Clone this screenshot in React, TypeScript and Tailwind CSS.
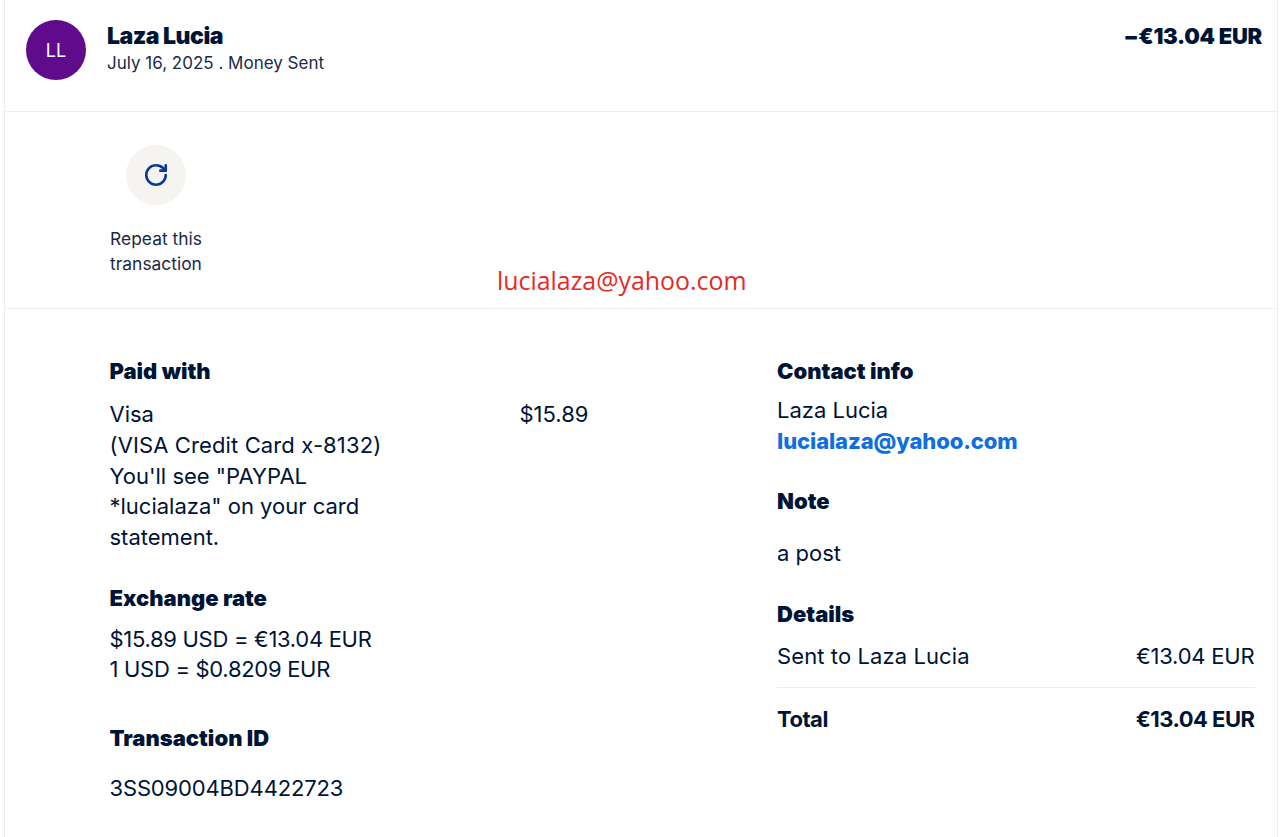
import { RotateCw } from "lucide-react";

const H = "font-black text-[22px] leading-[28px] tracking-[0px] text-[#001435]";
const B = "text-[22px] leading-[30.5px] text-[#001435]";

export default function App() {
  return (
    <div className="h-[837px] w-[1280px] overflow-hidden bg-white font-['Inter',sans-serif]">
      <div className="ml-[4px] mr-[2px] h-full border-x border-[#ededed]">
        <header className="flex h-[112px] items-start border-b border-[#ededed] pl-[21px] pr-[15px] pt-[20px]">
          <div className="flex h-[60px] w-[60px] shrink-0 items-center justify-center rounded-full bg-[#5f0b8c] text-[18px] text-white">LL</div>
          <div className="ml-[21px] flex-1">
            <div className="mt-[2px] text-[23px] font-black leading-[28px] tracking-[-0.5px] text-[#001435]">Laza Lucia</div>
            <div className="mt-[2px] text-[17px] leading-[22px] text-[#1b2a48]">July 16, 2025 . Money Sent</div>
          </div>
          <div className="mt-[2px] text-[22px] font-black leading-[28px] tracking-[-0.3px] text-[#001435]">−€13.04 EUR</div>
        </header>
        <section className="relative h-[197px] border-b border-[#ededed] pl-[104.5px] pt-[33px]">
          <div className="flex w-[93px] flex-col items-center">
            <div className="flex h-[60px] w-[60px] items-center justify-center rounded-full bg-[#f6f4f0]">
              <RotateCw className="h-[26px] w-[26px] text-[#0a3a94]" strokeWidth={2.4} />
            </div>
            <div className="mt-[21px] whitespace-nowrap text-center text-[17.4px] leading-[25px] text-[#1b2a48]">Repeat this<br />transaction</div>
          </div>
          <div className="absolute left-[492px] top-[150px] font-['Open_Sans',sans-serif] text-[24.9px] leading-[36px] text-[#e52b24]">lucialaza@yahoo.com</div>
        </section>
        <section className="grid grid-cols-[667.5px_477.5px] pl-[104.5px] pt-[48px]">
          <div>
            <div className={H}>Paid with</div>
            <div className="mt-[14px] flex">
              <div className="w-[410px] text-[22px] leading-[30.75px] text-[#001435]">Visa<br /><span className="tracking-[0.12px]">(VISA Credit Card x-8132)</span><br />You'll see "PAYPAL<br />*lucialaza" on your card<br />statement.</div>
              <div className={B}>$15.89</div>
            </div>
            <div className={`mt-[31px] ${H}`}>Exchange rate</div>
            <div className={`mt-[12px] tracking-[-0.3px] ${B}`}>$15.89 USD = €13.04 EUR<br />1 USD = $0.8209 EUR</div>
            <div className={`mt-[39px] ${H}`}>Transaction ID</div>
            <div className={`mt-[21px] tracking-[-0.15px] ${B}`}>3SS09004BD4422723</div>
          </div>
          <div>
            <div className={H}>Contact info</div>
            <div className={`mt-[10px] ${B}`}>Laza Lucia</div>
            <div className="text-[22px] font-extrabold leading-[30.5px] tracking-[-0.1px] text-[#0f6fe0]">lucialaza@yahoo.com</div>
            <div className={`mt-[31px] ${H}`}>Note</div>
            <div className={`mt-[23px] ${B}`}>a post</div>
            <div className={`mt-[31px] ${H}`}>Details</div>
            <div className={`mt-[13px] flex justify-between border-b border-[#ededed] pb-[16px] ${B}`}><span className="tracking-[0.1px]">Sent to Laza Lucia</span><span className="tracking-[-0.2px]">€13.04 EUR</span></div>
            <div className="mt-[17px] flex justify-between text-[22px] font-bold leading-[28px] tracking-[-0.5px] text-[#001435]"><span>Total</span><span>€13.04 EUR</span></div>
          </div>
        </section>
      </div>
    </div>
  );
}
